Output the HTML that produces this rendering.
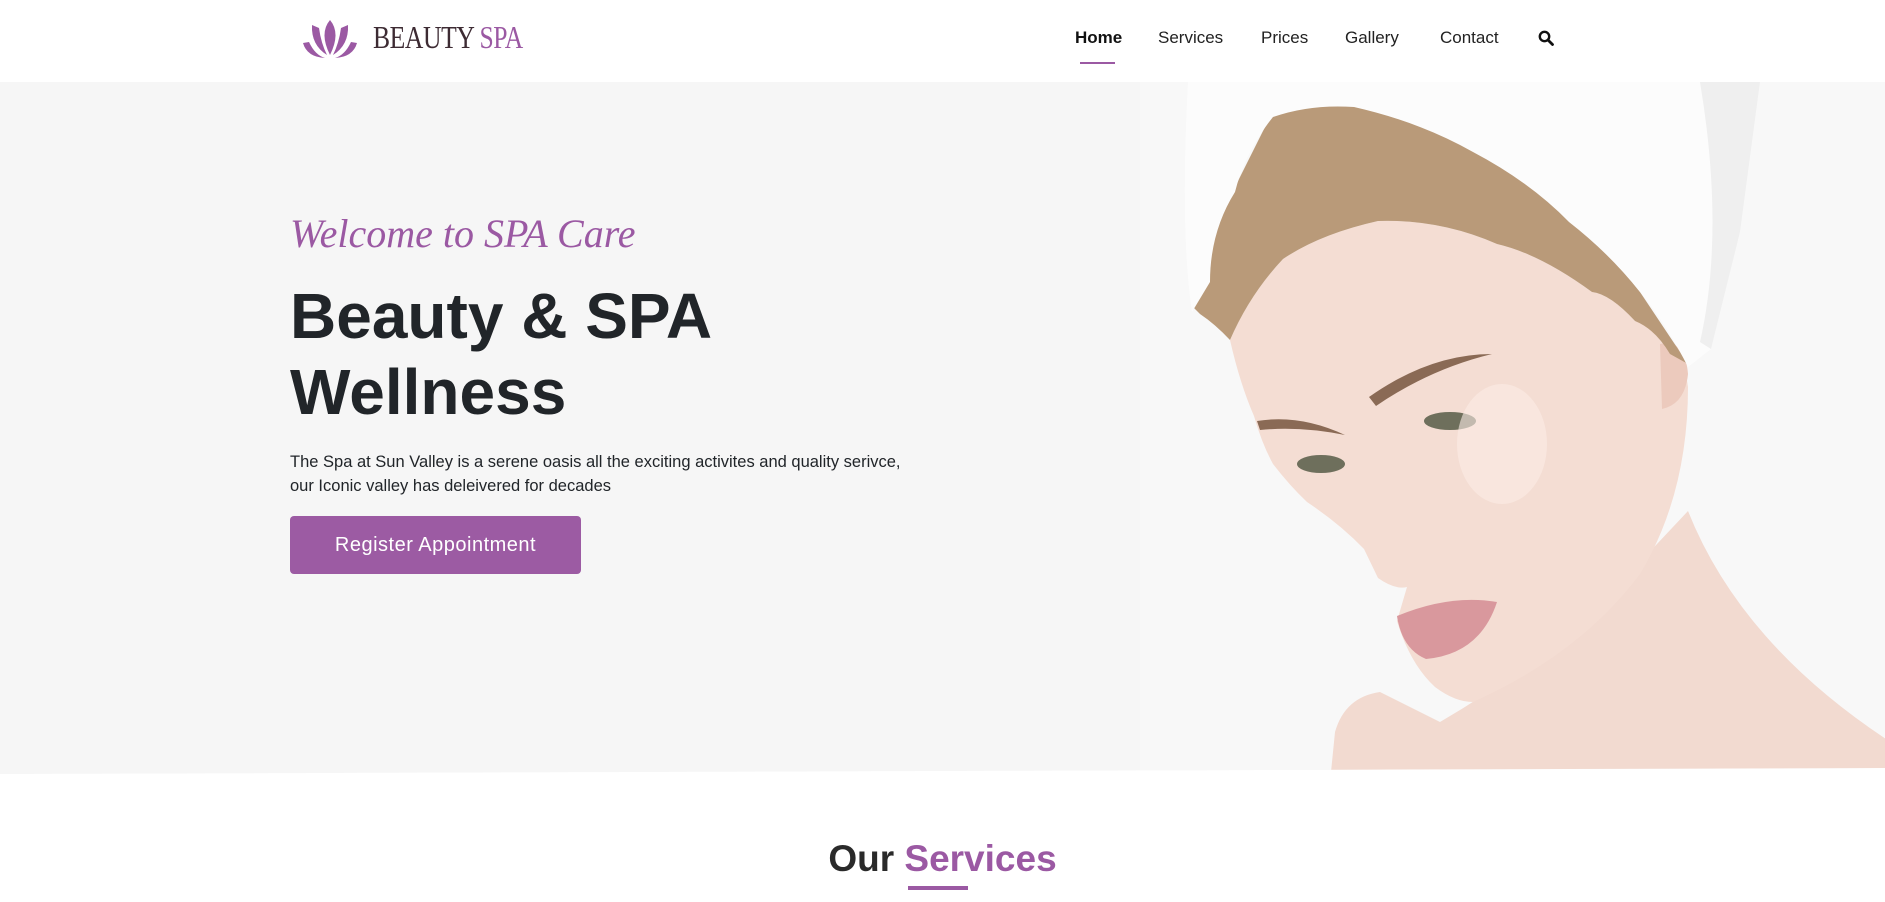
<!DOCTYPE html>
<html><head><meta charset="utf-8"><style>
*{margin:0;padding:0;box-sizing:border-box}
body{width:1885px;height:902px;overflow:hidden;background:#fff;font-family:"Liberation Sans",sans-serif;position:relative}
.hdr{position:absolute;left:0;top:0;width:1885px;height:82px;background:#fff}
.logo{position:absolute;left:373px;top:19px;font-family:"Liberation Serif",serif;font-size:32px;color:#3d2b33;letter-spacing:-0.5px;transform:scaleX(0.8);transform-origin:left}
.logo span{color:#9b59a3}
.nav a{position:absolute;top:28px;font-size:17px;color:#222;text-decoration:none}
.hero{position:absolute;left:0;top:82px;width:1885px;height:700px;background:#f6f6f6;clip-path:polygon(0 0,100% 0,100% 686px,0 692px)}
.w{position:absolute;left:290px;top:210px;font-family:"Liberation Serif",serif;font-style:italic;font-size:40px;color:#9b59a3}
h1{position:absolute;left:290px;top:278px;font-size:64px;line-height:76px;font-weight:bold;color:#212529}
p{position:absolute;left:290px;top:450px;font-size:16.5px;line-height:24px;color:#212529}
.btn{position:absolute;left:290px;top:516px;width:291px;height:58px;background:#9c5ba3;border-radius:4px;color:#fff;font-size:20px;text-align:center;line-height:58px;letter-spacing:0.5px}
.os{position:absolute;left:0;width:1885px;top:838px;text-align:center;font-size:37px;font-weight:bold;color:#2a2a2a}
.os span{color:#9b59a3}
</style></head><body>
<div class="hero">
<svg style="position:absolute;left:1140px;top:0" width="745" height="700" viewBox="0 0 745 700">
<rect x="0" y="0" width="745" height="700" fill="#f8f8f8"/>
<path d="M190 700 L195 650 Q205 615 240 610 L300 640 Q420 570 500 480 L548 429 Q600 560 746 657 L746 700 Z" fill="#f2dad0"/>
<g transform="translate(0,-28)">
<path d="M90 286 Q100 330 114 362 Q122 390 133 410 Q150 432 167 448 Q200 470 224 495 L238 524 Q255 536 267 533 L257 567 Q270 610 295 633 Q315 648 333 648 Q440 600 500 520 Q548 440 548 333 L543 300 Q520 270 495 267 Q470 240 452 238 Q400 200 357 190 Q300 165 238 167 Q180 180 143 205 Q110 240 90 286 Z" fill="#f4ddd3"/>
<path d="M520 290 Q545 285 548 320 Q545 350 522 355 Z" fill="#eccabd"/>
<path d="M52 252 Q60 150 95 133 L133 57 Q170 45 214 48 Q280 65 333 95 Q390 125 429 167 Q470 200 500 238 L548 310 L530 300 Q515 275 495 267 Q470 240 452 238 Q400 200 357 190 Q300 165 238 167 Q180 180 143 205 Q110 240 90 286 Q75 270 60 260 Z" fill="#b99a79"/>
<path d="M229 343 Q290 300 352 300 Q290 315 236 352 Z" fill="#8a6a55"/>
<path d="M117 367 Q160 360 205 381 Q160 372 120 376 Z" fill="#8a6a55"/>
<ellipse cx="310" cy="367" rx="26" ry="9" fill="#6e6f5c"/>
<ellipse cx="181" cy="410" rx="24" ry="9" fill="#6e6f5c"/>
<path d="M257 562 Q310 540 357 548 Q340 600 286 605 Q262 595 257 562Z" fill="#d9989d"/>
<ellipse cx="362" cy="390" rx="45" ry="60" fill="#fbece6" opacity="0.6"/>
</g>
<path d="M48 0 L620 0 L600 150 L571 267 L548 285 Q525 240 500 210 Q470 172 429 140 Q390 100 333 70 Q280 40 214 25 Q170 22 133 35 Q105 70 95 110 Q70 150 70 200 L52 230 Q40 150 48 0 Z" fill="#fcfcfc"/>
<path d="M560 0 L620 0 L600 150 L571 267 L560 260 Q585 150 560 0Z" fill="#efefef"/>
</svg>
</div>
<div class="hdr">
<svg style="position:absolute;left:295px;top:15px" width="70" height="50" viewBox="0 0 70 50">
<path d="M35 5 Q46 18 35 40 Q24 18 35 5Z" fill="#9b59a3"/>
<path d="M17 10 Q16 30 32 40 Q26 28 24 13Z" fill="#9b59a3"/>
<path d="M53 10 Q54 30 38 40 Q44 28 46 13Z" fill="#9b59a3"/>
<path d="M8 28 Q12 42 30 43 Q20 40 14 27Z" fill="#9b59a3"/>
<path d="M62 28 Q58 42 40 43 Q50 40 56 27Z" fill="#9b59a3"/>
</svg>
<div class="logo">BEAUTY <span>SPA</span></div>
<div class="nav">
<a style="left:1075px;font-weight:bold;color:#111">Home</a>
<a style="left:1158px">Services</a>
<a style="left:1261px">Prices</a>
<a style="left:1345px">Gallery</a>
<a style="left:1440px">Contact</a>
</div>
<div style="position:absolute;left:1080px;top:62px;width:35px;height:2px;background:#9b59a3"></div>
<svg style="position:absolute;left:1538px;top:30px" width="16" height="16" viewBox="0 0 16 16"><circle cx="6.5" cy="6.5" r="4.7" fill="none" stroke="#111" stroke-width="2.4"/><path d="M10 10 L14.5 14.5" stroke="#111" stroke-width="2.8" stroke-linecap="round"/></svg>
</div>
<div class="w">Welcome to SPA Care</div>
<h1>Beauty &amp; SPA<br>Wellness</h1>
<p>The Spa at Sun Valley is a serene oasis all the exciting activites and quality serivce,<br>our Iconic valley has deleivered for decades</p>
<div class="btn">Register Appointment</div>
<div class="os">Our <span>Services</span></div>
<div style="position:absolute;left:908px;top:886px;width:60px;height:4px;background:#9b59a3"></div>
</body></html>
